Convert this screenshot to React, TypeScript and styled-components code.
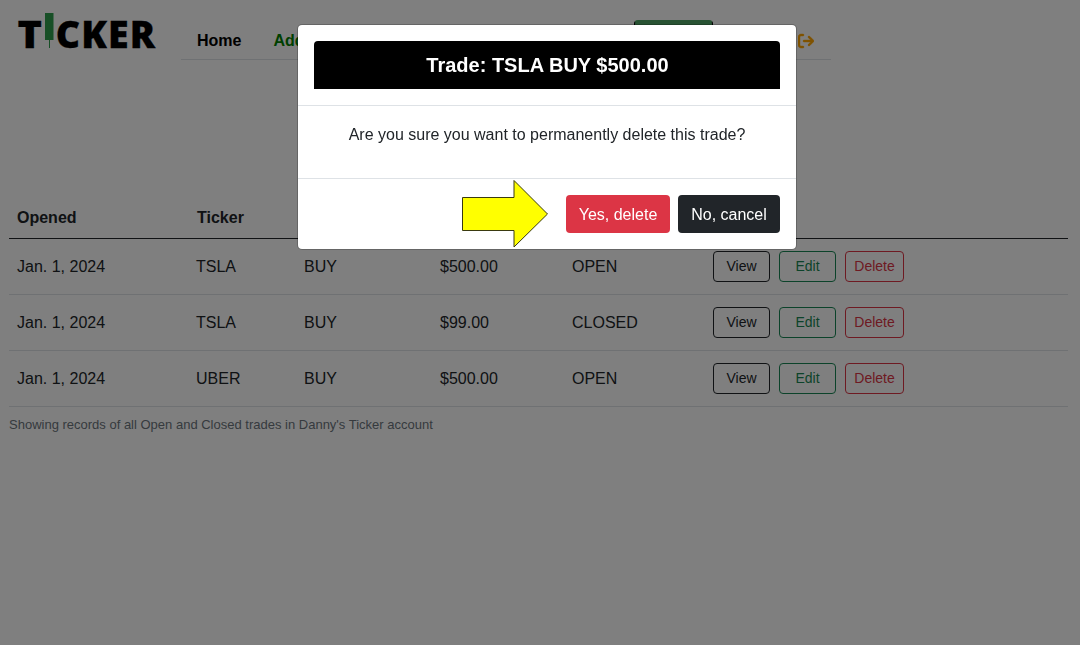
import React from "react";
import styled, { createGlobalStyle } from "styled-components";
import { FaArrowRightFromBracket } from "react-icons/fa6";

const GlobalStyle = createGlobalStyle`
  *, *::before, *::after { box-sizing: border-box; }
  body {
    margin: 0;
    background: #fff;
    color: #212529;
    font: 16px/24px "Liberation Sans", Arial, sans-serif;
    overflow: hidden;
  }
`;

const Page = styled.div`
  height: 645px;
  padding: 0 12px 0 9px;
`;

const Header = styled.header`
  display: flex;
  height: 60px;
`;

const Logo = styled.svg`
  width: 172px;
  height: 60px;
  flex: none;
`;

const Nav = styled.nav`
  display: flex;
  align-items: flex-start;
  width: 650px;
  padding: 20px 17px 0 16px;
  border-bottom: 1px solid #dee2e6;
`;

const NavLink = styled.a<{ $color: string }>`
  margin: 9px 32px 0 0;
  color: ${(p) => p.$color};
  font-weight: 700;
`;

const NavButton = styled.button`
  width: 79px;
  height: 38px;
  margin: 0 85px 0 auto;
  border: 1px solid #000;
  border-top: 2px solid #50a667;
  border-radius: 4px;
  background: #50a667;
`;

const LogoutIcon = styled(FaArrowRightFromBracket)`
  width: 16px;
  height: 16px;
  margin-top: 13px;
  color: orange;
  stroke: orange;
  stroke-width: 14px;
`;

const Table = styled.table`
  width: 1059px;
  margin-top: 138px;
  table-layout: fixed;
  border-collapse: separate;
  border-spacing: 0;
`;

const Th = styled.th`
  height: 41px;
  padding: 0 8px;
  border-bottom: 1px solid #212529;
  text-align: left;

  & + & {
    padding-left: 9px;
  }
`;

const Td = styled.td`
  height: 56px;
  padding: 0 8px;
  border-bottom: 1px solid #dee2e6;
`;

const Actions = styled.div`
  display: flex;
  gap: 9px;
`;

const RowButton = styled.button<{ $color: string; $wide?: boolean }>`
  width: ${(p) => (p.$wide ? 59 : 57)}px;
  height: 31px;
  padding: 0;
  border: 1px solid ${(p) => p.$color};
  border-radius: 4px;
  background: transparent;
  color: ${(p) => p.$color};
  font: 14px/21px "Liberation Sans", Arial, sans-serif;
`;

const Caption = styled.p`
  margin: 7px 0 0;
  color: #6c757d;
  font-size: 13px;
  line-height: 21px;
`;

const Backdrop = styled.div`
  position: fixed;
  inset: 0;
  background: rgba(0, 0, 0, 0.5);
`;

const Modal = styled.section`
  position: absolute;
  top: 24px;
  left: 297px;
  width: 500px;
  height: 226px;
  border: 1px solid rgba(0, 0, 0, 0.2);
  border-radius: 5px;
  background: #fff;
  background-clip: padding-box;
`;

const ModalHeader = styled.div`
  height: 81px;
  padding: 16px;
  border-bottom: 1px solid #dee2e6;
`;

const ModalTitle = styled.h5`
  margin: 0;
  height: 48px;
  padding-left: 1px;
  border-radius: 4px 4px 0 0;
  background: #000;
  color: #fff;
  font-size: 20px;
  line-height: 48px;
  text-align: center;
`;

const ModalBody = styled.p`
  height: 72px;
  margin: 0;
  padding: 17px 16px 16px;
  text-align: center;
`;

const ModalFooter = styled.div`
  display: flex;
  justify-content: flex-end;
  gap: 8px;
  padding: 16px;
  border-top: 1px solid #dee2e6;
`;

const ModalButton = styled.button<{ $bg: string; $width: number }>`
  width: ${(p) => p.$width}px;
  height: 38px;
  padding: 2px 0 0;
  border: 0;
  border-radius: 4px;
  background: ${(p) => p.$bg};
  color: #fff;
  font: 16px/24px "Liberation Sans", Arial, sans-serif;
`;

const Pointer = styled.svg`
  position: absolute;
  top: 153px;
  left: 162px;
  width: 90px;
  height: 72px;
`;

const trades = [
  { opened: "Jan. 1, 2024", ticker: "TSLA", action: "BUY", amount: "$500.00", status: "OPEN" },
  { opened: "Jan. 1, 2024", ticker: "TSLA", action: "BUY", amount: "$99.00", status: "CLOSED" },
  { opened: "Jan. 1, 2024", ticker: "UBER", action: "BUY", amount: "$500.00", status: "OPEN" },
];

const TickerLogo = () => (
  <Logo viewBox="9 0 172 60">
    <g
      fontFamily="Open Sans, sans-serif"
      fontWeight="800"
      fontSize="37.5"
      stroke="#000"
      strokeWidth="0.3"
    >
      <text x="17.5" y="48.2" textLength="24.5" lengthAdjust="spacingAndGlyphs">T</text>
      <text x="55.7" y="48.2" textLength="99.5" lengthAdjust="spacing">CKER</text>
    </g>
    <rect x="45" y="13" width="8.5" height="27" fill="#2f9e4d" />
    <rect x="49" y="40" width="1" height="8" fill="#2f9e4d" />
  </Logo>
);

export default function App() {
  return (
    <>
      <GlobalStyle />
      <Page>
        <Header>
          <TickerLogo />
          <Nav>
            <NavLink $color="#000">Home</NavLink>
            <NavLink $color="green">Add</NavLink>
            <NavButton />
            <LogoutIcon />
          </Nav>
        </Header>
        <Table>
          <colgroup>
            <col width="179" />
            <col width="108" />
            <col width="136" />
            <col width="132" />
            <col width="141" />
            <col />
          </colgroup>
          <thead>
            <tr>
              <Th>Opened</Th>
              <Th>Ticker</Th>
              <Th />
              <Th />
              <Th />
              <Th />
            </tr>
          </thead>
          <tbody>
            {trades.map((t, i) => (
              <tr key={i}>
                <Td>{t.opened}</Td>
                <Td>{t.ticker}</Td>
                <Td>{t.action}</Td>
                <Td>{t.amount}</Td>
                <Td>{t.status}</Td>
                <Td>
                  <Actions>
                    <RowButton $color="#212529">View</RowButton>
                    <RowButton $color="#198754">Edit</RowButton>
                    <RowButton $color="#dc3545" $wide>Delete</RowButton>
                  </Actions>
                </Td>
              </tr>
            ))}
          </tbody>
        </Table>
        <Caption>Showing records of all Open and Closed trades in Danny's Ticker account</Caption>
      </Page>
      <Backdrop />
      <Modal>
        <ModalHeader>
          <ModalTitle>Trade: TSLA BUY $500.00</ModalTitle>
        </ModalHeader>
        <ModalBody>Are you sure you want to permanently delete this trade?</ModalBody>
        <ModalFooter>
          <ModalButton $bg="#dc3545" $width={104}>Yes, delete</ModalButton>
          <ModalButton $bg="#212529" $width={102}>No, cancel</ModalButton>
        </ModalFooter>
        <Pointer viewBox="460 178 90 72">
          <path
            d="M462.5 197.5H514V180.5L547.5 214L514 247V230.5H462.5Z"
            fill="#ff0"
            stroke="#3a3a10"
          />
        </Pointer>
      </Modal>
    </>
  );
}
